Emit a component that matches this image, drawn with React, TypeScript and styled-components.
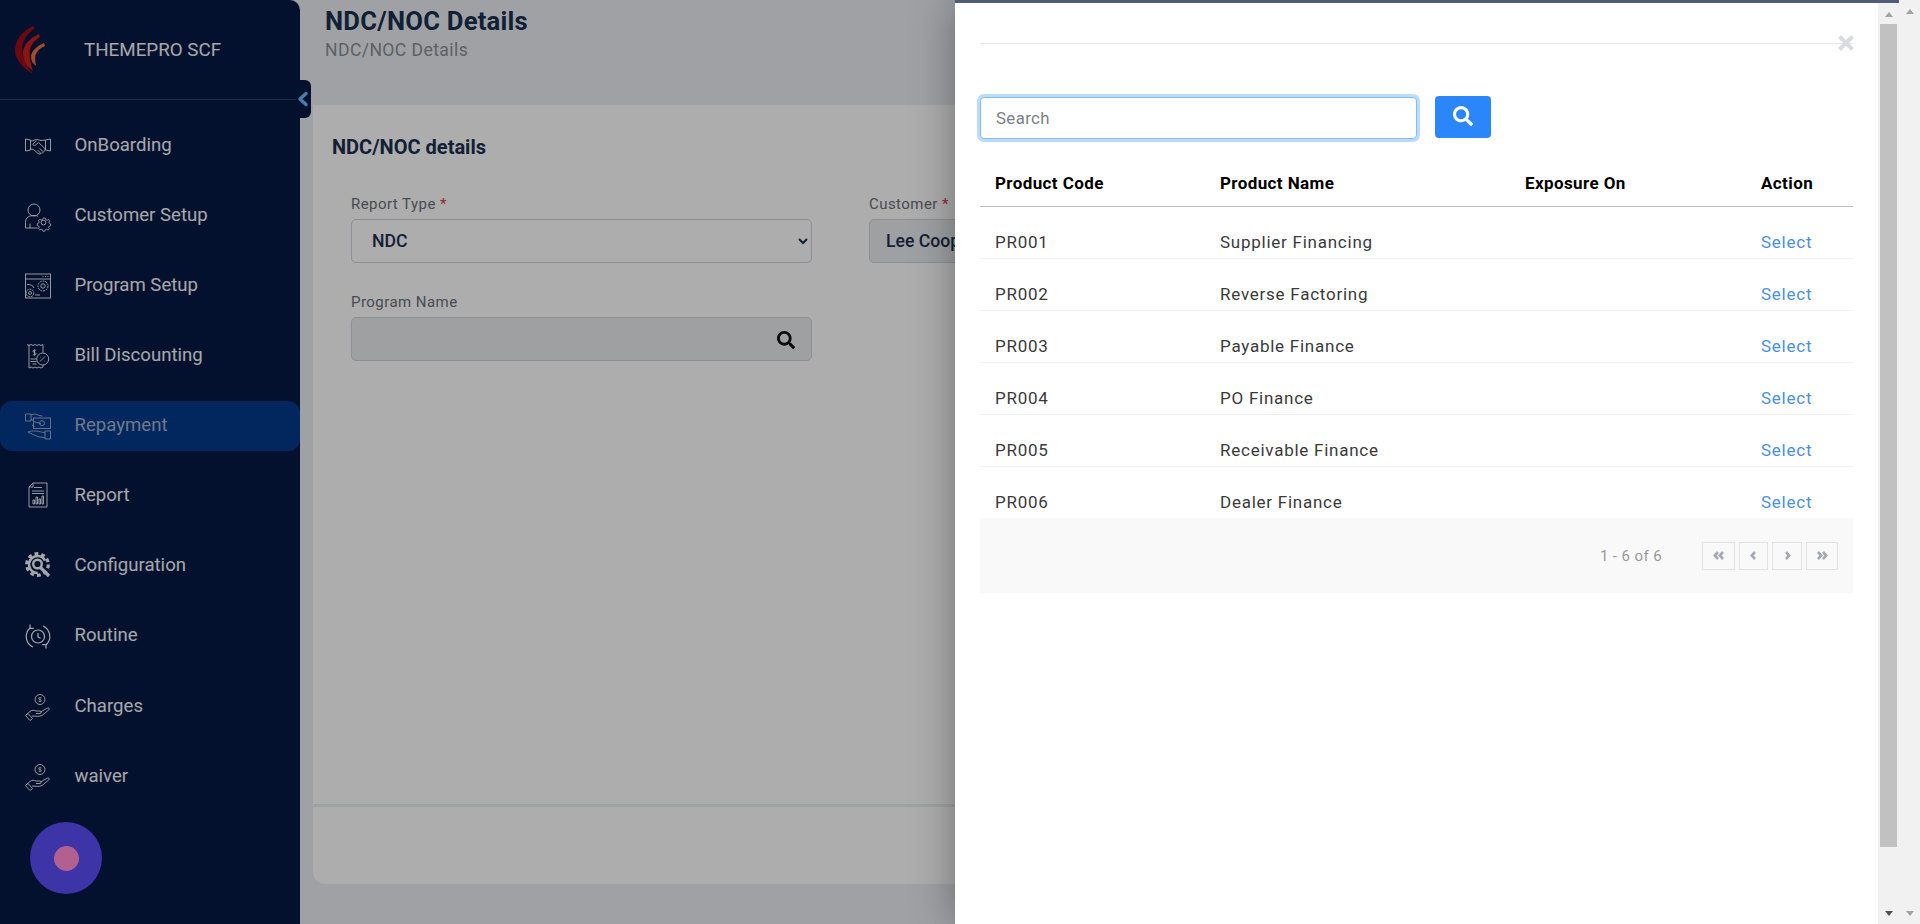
import React from "react";
import styled, { createGlobalStyle } from "styled-components";
import { FaSearch } from "react-icons/fa";

const Global = createGlobalStyle`
  html, body { margin: 0; padding: 0; height: 924px; overflow: hidden; background: #f1f1f1; }
  * { box-sizing: border-box; }
  body { font-family: Roboto, "Liberation Sans", sans-serif; }
`;

const Page = styled.div`display: flex; width: 1920px; height: 924px; overflow: hidden;`;
const Viewport = styled.div`position: relative; display: flex; flex: 1; min-width: 0; background: #ebeef4;`;

const Sidebar = styled.aside`
  position: relative;
  flex: 0 0 300px;
  display: flex;
  flex-direction: column;
  background: #071a45;
  border-top-right-radius: 10px;
  color: #f4f6fa;
`;
const Brand = styled.div`
  display: flex;
  align-items: center;
  height: 100px;
  padding-left: 14px;
  border-bottom: 1px solid #2c3b60;
`;
const BrandName = styled.span`margin-left: 38px; font-size: 18.8px;`;
const Toggle = styled.div`
  position: absolute;
  left: 296px;
  top: 80px;
  width: 15px;
  height: 38px;
  display: flex;
  align-items: center;
  justify-content: center;
  padding-right: 2px;
  background: #071a45;
  border-radius: 0 6px 6px 0;
`;
const Nav = styled.nav`display: flex; flex-direction: column; padding-top: 20px;`;
const NavItem = styled.div<{ $active?: boolean }>`
  display: flex;
  align-items: center;
  height: 50px;
  margin-bottom: 20.15px;
  padding: 0 0 1px 25px;
  gap: 23.500px;
  font-size: 18.600px;
  font-weight: 400;
  border-radius: 12px;
  background: ${(p) => (p.$active ? "#033a8c" : "transparent")};
  color: ${(p) => (p.$active ? "#a4b3cc" : "#f4f6fa")};
`;
const IconBox = styled.svg`
  width: 26px;
  height: 26px;
  flex: none;
  fill: none;
  overflow: visible;
  stroke: currentColor;
  stroke-width: 0.9;
`;
const Launcher = styled.div`
  position: absolute;
  left: 30px;
  top: 822px;
  z-index: 5;
  width: 72px;
  height: 72px;
  border-radius: 50%;
  background: #3d34a8;
  display: flex;
  align-items: center;
  justify-content: center;
`;
const LauncherDot = styled.span`
  width: 25px;
  height: 25px;
  border-radius: 50%;
  background: #b2608f;
`;

const Main = styled.main`flex: 1; min-width: 0; display: flex; flex-direction: column; padding: 0 0 40px 13px;`;
const PageHead = styled.header`height: 105px; padding-left: 12px; padding-top: 6px;`;
const Title = styled.h1`margin: 0; font-size: 25.600px; line-height: 30px; font-weight: 700; color: #1b3050; letter-spacing: 0.25px;`;
const Crumb = styled.div`margin-top: 4px; font-size: 17.600px; line-height: 20px; letter-spacing: 0.4px; color: #8a8e96;`;
const Card = styled.section`
  flex: 1;
  display: flex;
  flex-direction: column;
  background: #fff;
  border-radius: 0 0 0 12px;
`;
const CardTitle = styled.h2`margin: 0; padding: 30px 0 0 19px; font-size: 20px; line-height: 24px; font-weight: 700; color: #1b3050;`;
const FormGrid = styled.div`
  flex: 1;
  display: grid;
  grid-template-columns: 461px 461px;
  grid-auto-rows: 98px;
  column-gap: 57px;
  padding: 36px 0 0 38px;
`;
const Field = styled.div`display: flex; flex-direction: column;`;
const Label = styled.label`font-size: 15px; line-height: 18px; margin-bottom: 6px; letter-spacing: 0.45px; color: #6a6f78;`;
const Req = styled.span`color: #e0354a;`;
const Select = styled.select`
  height: 44px;
  padding: 0 16px;
  font: 500 17.600px Roboto, sans-serif;
  color: #1b3050;
  background: #fff;
  border: 1px solid #ced4da;
  border-radius: 5px;
  outline: none;
`;
const Readonly = styled.div`
  position: relative;
  height: 44px;
  display: flex;
  align-items: center;
  padding: 0 16px;
  font-size: 17.600px;
  font-weight: 500;
  color: #1b3050;
  background: #e9ecef;
  border: 1px solid #ced4da;
  border-radius: 5px;
`;
const FieldIcon = styled.span`position: absolute; right: 16px; top: 13px; font-size: 18px; line-height: 0; color: #111;`;
const CardFoot = styled.div`height: 80px; border-top: 3px solid #ebeef4;`;

const Overlay = styled.div`position: absolute; inset: 0; background: rgba(0, 0, 0, 0.32);`;
const Modal = styled.div`
  position: absolute;
  top: 0;
  right: 0;
  bottom: 0;
  width: 944px;
  display: flex;
  background: #fff;
  border-top: 3px solid #4f5b78;
  box-shadow: 0 0 40px rgba(0, 0, 0, 0.35);
`;
const ModalBody = styled.div`position: relative; flex: 1; min-width: 0; padding: 0 25px;`;
const ModalHead = styled.div`height: 41px; border-bottom: 1px solid #e6e6e6;`;
const Close = styled.span`position: absolute; right: 24px; top: 32px; width: 16px; height: 16px; line-height: 0; color: #d9dbe0;`;
const SearchRow = styled.div`display: flex; align-items: flex-start; gap: 18px; padding-top: 52px;`;
const SearchInput = styled.input`
  width: 437px;
  height: 42px;
  margin-top: 1px;
  padding: 0 15px;
  font: 400 16.800px Roboto, sans-serif;
  letter-spacing: 0.4px;
  border: 1px solid #80bdff;
  border-radius: 4px;
  box-shadow: 0 0 0 3px #bcdcfb;
  outline: none;
  &::placeholder { color: #7b8087; opacity: 1; }
`;
const SearchButton = styled.button`
  width: 56px;
  height: 42px;
  display: flex;
  align-items: center;
  justify-content: center;
  padding: 0 0 2px;
  border: 0;
  border-radius: 4px;
  background: #2b87f9;
  color: #fff;
  font-size: 20px;
`;
const Table = styled.div`margin-top: 21px; height: 358px; overflow: hidden; font-size: 17px;`;
const cols = "225px 305px 236px 107px";
const HeadRow = styled.div`
  display: grid;
  grid-template-columns: ${cols};
  height: 47px;
  align-items: center;
  border-bottom: 1px solid #bdbdbd;
  font-weight: 700;
  letter-spacing: 0.4px;
  color: #000;
`;
const Row = styled.div`
  display: grid;
  grid-template-columns: ${cols};
  height: 52px;
  padding-top: 26px;
  line-height: 19px;
  border-bottom: 1px solid #f2f2f2;
  letter-spacing: 0.75px;
  color: #3a3a3a;
  &:last-child { border-bottom: 0; }
`;
const Cell = styled.div`padding: 0 15px;`;
const SelectLink = styled.a`color: #4a90e2; cursor: pointer;`;
const Pager = styled.div`
  display: flex;
  align-items: center;
  justify-content: flex-end;
  height: 75px;
  padding-right: 15px;
  background: #f9f9f9;
  font-size: 15px;
  letter-spacing: 0.4px;
  color: #999;
`;
const PagerText = styled.span`margin-right: 40px;`;
const PagerButtons = styled.div`display: flex; gap: 4px;`;
const PagerButton = styled.span<{ $w: number }>`
  width: ${(p) => p.$w}px;
  height: 28px;
  display: flex;
  align-items: center;
  justify-content: center;
  border: 1px solid #e2e2e2;
  color: #a3a9b0;
`;

const Track = styled.div`
  position: relative;
  flex: 0 0 21px;
  display: flex;
  flex-direction: column;
  align-items: center;
  background: #f1f1f1;
`;
const Arrow = styled.i<{ $dir: "up" | "down"; $dark?: boolean }>`
  position: absolute;
  ${(p) => (p.$dir === "up" ? "top: 9px;" : "bottom: 8px;")}
  width: 0;
  height: 0;
  border-left: 4.5px solid transparent;
  border-right: 4.5px solid transparent;
  ${(p) => `border-${p.$dir === "up" ? "bottom" : "top"}: 5px solid ${p.$dark ? "#505050" : "#a3a3a3"};`}
`;
const Thumb = styled.div`margin-top: 21px; width: 17px; height: 823px; background: #c1c1c1;`;

const Logo = () => (
  <svg width="32" height="50" viewBox="0 0 32 50" fill="none">
    <path d="M19 1C8 6 1 16 1 25C1 35 10 44 19 49C13 42 8 33 8 25C8 16 13 9 21 3Z" fill="#9c0f15" />
    <path d="M25 9C16 13 9 20 9 28C9 35 12 41 19 46C17 40 15.500 34 15.500 28C16 21 19 16 26 12Z" fill="#cf1f1c" />
    <path d="M30 18C23 21 17 26 17 32C17 36 19 38 22 41C21 36 21 33 21.500 30C23 26 26 23 31 21Z" fill="#ee7040" />
  </svg>
);

const Handshake = () => (
  <IconBox viewBox="0 0 26 26">
    <g transform="translate(0 1)">
      <path d="M0.500 6l5 1v10l-5 1zM25.500 6l-5 1v10l5 1z" />
      <path d="M5.500 8c3 0 4-1.500 6-1.500 2 0 3 1 4.500 1l4.500-.5M5.500 16l3 .5 4.500 4c1.500 1 3 .5 3.500-.5 1.500 0 2.500-1 2.500-2 1 0 1.500-1.500 1-2.500M20.500 16l-7-6.500-3 2.500c-1.500 1-3 0-2.500-1l3.500-3.500" />
      <path d="M12.500 17l3 3M14.500 15.500l3.500 3" />
    </g>
  </IconBox>
);
const CustomerIcon = () => (
  <IconBox viewBox="0 0 26 26">
    <g transform="translate(0 1.500)">
      <circle cx="9" cy="6.500" r="6" />
      <path d="M13 13c-1 -.8-2-1-4-1-5 0-8.500 2-8.500 7v5.500h12" />
      <path d="M5 20v4.500" />
      <circle cx="18.500" cy="19" r="2.400" />
      <path d="M18 12.500h2l.5 1.800 1.700.7 1.600-.9 1.200 1.400-.9 1.700.5 1.300 1.400.7v2l-1.700.6-.5 1.300.8 1.500-1.400 1.300-1.600-.8-1.500.6-.6 1.600h-2l-.5-1.700-1.500-.6-1.600.8-1.300-1.300.8-1.600-.6-1.400-1.700-.6v-2l1.700-.6.5-1.400-.8-1.600 1.400-1.300 1.600.8 1.500-.6z" transform="translate(2.200 3.200) scale(.9)" />
    </g>
  </IconBox>
);
const ProgramIcon = () => (
  <IconBox viewBox="0 0 26 26">
    <rect x="0.500" y="2" width="25" height="24" />
    <path d="M.5 7h25" />
    <path d="M17.500 4.500h.8M20 4.500h.8M22.500 4.500h.8" />
    <circle cx="18" cy="14" r="5" strokeDasharray="2 .8" />
    <circle cx="18" cy="14" r="2.200" />
    <circle cx="5" cy="21" r="3.800" strokeDasharray="2 .8" />
    <circle cx="5" cy="21" r="1.500" />
    <path d="M2 12.500c3 0 6 .5 7 3.500M10 23h5" />
  </IconBox>
);
const BillIcon = () => (
  <IconBox viewBox="0 0 26 26">
    <path d="M2 2.500l2 1 2-1 2 1 2-1 2 1 2-1 2 1 2-1v8M18 23v2l-2 1-2-1-2 1-2-1-2 1-2-1-2 1V2.500" />
    <circle cx="17.700" cy="17" r="6" />
    <path d="M15 19.500l5-5M15.500 15h.5M19.500 19h.5M5.500 17h6M5.500 19.500h6M7.500 22h4" />
    <path d="M11 8.500c-1-.8-3-.5-3 .8s3 1 3 2.500-2.200 1.500-3.200.6M9.500 7.500v6" />
  </IconBox>
);
const RepayIcon = () => (
  <IconBox viewBox="0 0 26 26">
    <path d="M.5 2h5.500v7h-5.500zM6 3c3-1.500 6-1 7.500.5l4 .5" />
    <rect x="8.500" y="6" width="17" height="10.500" />
    <circle cx="17" cy="11.200" r="2.500" />
    <path d="M6 7l4 3 6 1.500M9.500 14.500l-2.500-1.500" />
    <path d="M25.500 19h-5.500v8h5.500zM20 20.500c-4 0-6-1.500-9-1.500-3 0-6 0-8 1l6 3 5 2 6 .5" />
  </IconBox>
);
const ReportIcon = () => (
  <IconBox viewBox="0 0 26 26">
    <path d="M8 1h14v24H4V5zM8 1v4H4" />
    <path d="M9 5.500h8M7 9h12M7 11.500h12" />
    <path d="M8 22v-4h1.500v4zM11 22v-7h1.500v7zM14 22v-5h1.500v5zM17 22v-8h1.500v8z" />
  </IconBox>
);
const ConfigIcon = () => (
  <svg width="26" height="26" viewBox="0 0 26 26" fill="none" stroke="currentColor" style={{ flex: "none" }}>
    <circle cx="12.500" cy="12.500" r="10.800" strokeWidth="3.200" strokeDasharray="3.800 3" />
    <circle cx="12.500" cy="12.500" r="8.500" strokeWidth="2.600" strokeDasharray="36 17" strokeDashoffset="-2" transform="rotate(75 12.500 12.500)" />
    <circle cx="12.500" cy="12" r="4.300" strokeWidth="2.400" />
    <path d="M15.500 15.500l8.500 8.500" strokeWidth="3.200" />
  </svg>
);
const RoutineIcon = () => (
  <IconBox viewBox="0 0 26 26" style={{ strokeWidth: 1.200 }}>
    <g transform="translate(0 1.500)">
      <path d="M5 4.500A11.500 11.500 0 0 0 8 23.500M21 21.500A11.500 11.500 0 0 0 18 2.500M5 1v3.800h3.800M21 25v-3.800h-3.800" />
      <circle cx="13" cy="13" r="6.500" />
      <path d="M13 9.500v3.800l2.500 1.500" />
    </g>
  </IconBox>
);
const HandCoin = () => (
  <IconBox viewBox="0 0 26 26">
    <circle cx="15" cy="6.500" r="5" />
    <path d="M15 4v5M16.500 5c-1-.6-3-.5-3 .7s3 .8 3 2-2 1.100-3 .5" strokeWidth=".7" />
    <g transform="translate(0 2)">
      <path d="M1 20l4-3.500c2-1.500 4-1.500 6-.5h4c1.500 0 1.500 2.500 0 2.500h-4M15.500 17l7-4c1.500-.5 2.500 1 1.200 2l-6.700 5.500c-3 1.500-6 .5-10 .5" />
      <path d="M.5 20.500l4.500 5 2.500-2-4.500-5z" />
    </g>
  </IconBox>
);

const Chevrons = ({ double, flip }: { double?: boolean; flip?: boolean }) => (
  <svg width="11" height="9" viewBox="0 0 11 9" fill="none" stroke="currentColor" strokeWidth="2.600" style={flip ? { transform: "scaleX(-1)" } : undefined}>
    {double ? <path d="M5 1L1.800 4.500 5 8M10 1L6.800 4.500 10 8" /> : <path d="M7 1L3.800 4.500 7 8" />}
  </svg>
);

const navItems: { label: string; icon: React.ReactNode; active?: boolean }[] = [
  { label: "OnBoarding", icon: <Handshake /> },
  { label: "Customer Setup", icon: <CustomerIcon /> },
  { label: "Program Setup", icon: <ProgramIcon /> },
  { label: "Bill Discounting", icon: <BillIcon /> },
  { label: "Repayment", icon: <RepayIcon />, active: true },
  { label: "Report", icon: <ReportIcon /> },
  { label: "Configuration", icon: <ConfigIcon /> },
  { label: "Routine", icon: <RoutineIcon /> },
  { label: "Charges", icon: <HandCoin /> },
  { label: "waiver", icon: <HandCoin /> },
];

const products = [
  ["PR001", "Supplier Financing"],
  ["PR002", "Reverse Factoring"],
  ["PR003", "Payable Finance"],
  ["PR004", "PO Finance"],
  ["PR005", "Receivable Finance"],
  ["PR006", "Dealer Finance"],
];

export default function App() {
  return (
    <Page>
      <Global />
      <Viewport>
        <Sidebar>
          <Brand>
            <Logo />
            <BrandName>THEMEPRO SCF</BrandName>
          </Brand>
          <Toggle>
            <svg width="12" height="16" viewBox="0 0 12 16" fill="none" stroke="#6db5ff" strokeWidth="3.500" strokeLinecap="round" strokeLinejoin="round">
              <path d="M9 2.500L3 8l6 5.500" />
            </svg>
          </Toggle>
          <Nav>
            {navItems.map((n) => (
              <NavItem key={n.label} $active={n.active}>
                {n.icon}
                {n.label}
              </NavItem>
            ))}
          </Nav>
        </Sidebar>
        <Main>
          <PageHead>
            <Title>NDC/NOC Details</Title>
            <Crumb>NDC/NOC Details</Crumb>
          </PageHead>
          <Card>
            <CardTitle>NDC/NOC details</CardTitle>
            <FormGrid>
              <Field>
                <Label>Report Type <Req>*</Req></Label>
                <Select defaultValue="NDC">
                  <option>NDC</option>
                  <option>NOC</option>
                </Select>
              </Field>
              <Field>
                <Label>Customer <Req>*</Req></Label>
                <Readonly>Lee Cooper</Readonly>
              </Field>
              <Field>
                <Label>Program Name</Label>
                <Readonly>
                  <FieldIcon><FaSearch /></FieldIcon>
                </Readonly>
              </Field>
            </FormGrid>
            <CardFoot />
          </Card>
        </Main>
        <Overlay>
          <Modal>
            <ModalBody>
              <ModalHead />
              <Close>
                <svg width="16" height="16" viewBox="0 0 16 16" stroke="currentColor" strokeWidth="4">
                  <path d="M1.500 1.500l13 13M14.500 1.500l-13 13" />
                </svg>
              </Close>
              <SearchRow>
                <SearchInput placeholder="Search" />
                <SearchButton><FaSearch /></SearchButton>
              </SearchRow>
              <Table>
                <HeadRow>
                  <Cell>Product Code</Cell>
                  <Cell>Product Name</Cell>
                  <Cell>Exposure On</Cell>
                  <Cell>Action</Cell>
                </HeadRow>
                {products.map(([code, name]) => (
                  <Row key={code}>
                    <Cell>{code}</Cell>
                    <Cell>{name}</Cell>
                    <Cell />
                    <Cell><SelectLink>Select</SelectLink></Cell>
                  </Row>
                ))}
              </Table>
              <Pager>
                <PagerText>1 - 6 of 6</PagerText>
                <PagerButtons>
                  <PagerButton $w={33}><Chevrons double /></PagerButton>
                  <PagerButton $w={29}><Chevrons /></PagerButton>
                  <PagerButton $w={30}><Chevrons flip /></PagerButton>
                  <PagerButton $w={32}><Chevrons double flip /></PagerButton>
                </PagerButtons>
              </Pager>
            </ModalBody>
            <Track>
              <Arrow $dir="up" />
              <Thumb />
              <Arrow $dir="down" $dark />
            </Track>
          </Modal>
        </Overlay>
        <Launcher><LauncherDot /></Launcher>
      </Viewport>
      <Track>
        <Arrow $dir="up" />
        <Arrow $dir="down" />
      </Track>
    </Page>
  );
}
